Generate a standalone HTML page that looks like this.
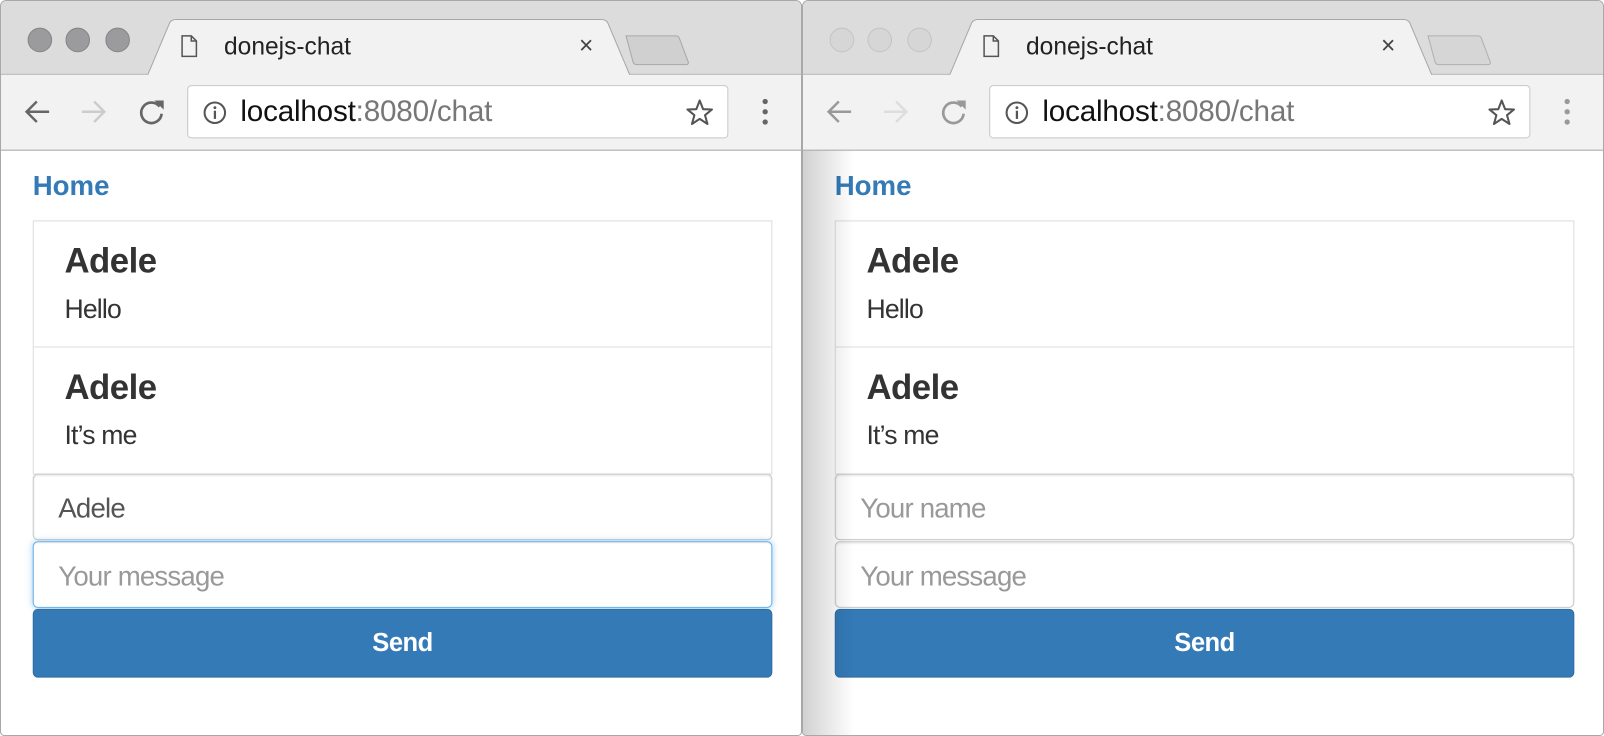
<!DOCTYPE html>
<html><head><meta charset="utf-8"><style>
*{box-sizing:border-box;margin:0;padding:0}
html,body{width:1604px;height:736px;overflow:hidden;background:#fff;font-family:"Liberation Sans",Arial,sans-serif}
#stage{position:absolute;left:0;top:0;width:1568px;height:718px;transform:scale(1.02296,1.02507);transform-origin:0 0}
.win{position:absolute;top:0;width:784px;height:718px;border:1px solid #a8a8a8;border-radius:6px 6px 4px 4px;overflow:hidden;background:#fff}
.top{position:absolute;left:0;top:0;right:0;height:72px;background:#dcdcdc;border-bottom:1px solid #b0b0b0}
.light{position:absolute;top:26px;width:24px;height:24px;border-radius:50%;background:#9b9a9c;border:1px solid #86858a}
.inactive .light{background:#d6d6d6;border-color:#c4c4c4}
.tab{position:absolute;left:143px;top:17px;width:472px;height:56px}
.newtab{position:absolute;left:608px;top:32px;width:66px;height:32px}
.tabtitle{position:absolute;left:218px;top:31px;font-size:24px;color:#222}
.tabx{position:absolute;left:565px;top:30px;font-size:24px;color:#444}
.bar{position:absolute;left:0;right:0;top:72px;height:74px;background:#f2f2f2;border-bottom:1px solid #a8a8a8}
.omni{position:absolute;left:182px;top:10px;width:529px;height:52px;background:#fff;border:1px solid #c8c8c8;border-radius:4px}
.url{position:absolute;left:51px;top:9px;font-size:29px;color:#111;letter-spacing:-0.2px}
.url span{color:#777}
.home{position:absolute;left:31px;top:165px;font-size:27px;font-weight:bold;color:#337ab7}
.list{position:absolute;left:31px;top:214px;width:723px;height:248px;border:1px solid #ddd}
.item{height:123px;border-bottom:1px solid #ddd;padding:0 0 0 30px;position:relative}
.item:last-child{border-bottom:none}
.item b{position:absolute;left:30px;top:20px;font-size:34px;color:#333;letter-spacing:-0.5px}
.item i{position:absolute;left:30px;top:70px;font-size:26px;font-style:normal;color:#333;letter-spacing:-0.8px}
.inp{position:absolute;left:31px;width:723px;height:65px;border:1px solid #c8c8c8;border-radius:5px;background:#fff;box-shadow:inset 0 1px 2px rgba(0,0,0,.12);font-size:27px;padding:18px 0 0 24px;color:#999;letter-spacing:-0.8px}
.focus{border-color:#66afe9;box-shadow:inset 0 1px 1px rgba(0,0,0,.075),0 0 6px rgba(102,175,233,.6)}
.btn{position:absolute;left:31px;top:593px;width:723px;height:67px;background:#337ab7;border:1px solid #2e6da4;border-radius:5px;color:#fff;font-size:25px;font-weight:bold;text-align:center;line-height:64px;letter-spacing:-0.5px}
.shadow{position:absolute;left:0;top:146px;width:50px;bottom:0;background:linear-gradient(90deg,rgba(0,0,0,.18),rgba(0,0,0,0))}
</style></head><body><div id="stage">

<div class="win" style="left:0">
 <div class="top"></div>
 <div class="light" style="left:26px"></div><div class="light" style="left:63px"></div><div class="light" style="left:102px"></div>
 <svg class="tab" viewBox="0 0 472 56"><path d="M0 56 L22 4 Q24 1 28 1 L444 1 Q448 1 450 4 L472 56 Z" fill="#f2f2f2" stroke="#a8a8a8"/><rect x="1" y="55" width="470" height="2" fill="#f2f2f2"/></svg>
 <svg class="newtab" viewBox="0 0 66 32"><path d="M3 2 L52 2 Q54 2 55 4 L64 28 Q64 30 62 30 L13 30 Q11 30 10 28 Z" fill="#d0d0d0" stroke="#a8a8a8"/></svg>
 <svg style="position:absolute;left:176px;top:33px" width="16" height="22" viewBox="0 0 16 22"><path d="M1 1 H10 L15 6 V21 H1 Z M10 1 V6 H15" fill="none" stroke="#555" stroke-width="1.5"/></svg>
 <div class="tabtitle">donejs-chat</div><div class="tabx">×</div>
 <div class="bar">
  <svg style="position:absolute;left:22px;top:22px" width="28" height="28" viewBox="0 0 28 28"><path d="M25 14 H4 M13 4 L3 14 L13 24" fill="none" stroke="#666" stroke-width="2.4"/></svg>
  <svg style="position:absolute;left:76px;top:22px" width="28" height="28" viewBox="0 0 28 28"><path d="M3 14 H24 M15 4 L25 14 L15 24" fill="none" stroke="#ccc" stroke-width="2.4"/></svg>
  <svg style="position:absolute;left:133px;top:22px" width="28" height="28" viewBox="0 0 28 28"><path d="M22 9 A10 10 0 1 0 24 16" fill="none" stroke="#666" stroke-width="2.6"/><path d="M17 3 L26 3 L26 12 Z" fill="#666"/></svg>
  <div class="omni">
   <svg style="position:absolute;left:14px;top:14px" width="24" height="24" viewBox="0 0 24 24"><circle cx="12" cy="12" r="10" fill="none" stroke="#555" stroke-width="2"/><rect x="11" y="10" width="2.2" height="8" fill="#555"/><circle cx="12.1" cy="7" r="1.4" fill="#555"/></svg>
   <div class="url">localhost<span>:8080/chat</span></div>
   <svg style="position:absolute;left:486px;top:12px" width="28" height="28" viewBox="0 0 28 28"><path d="M14 2 L17.3 10.5 L26 10.8 L19.2 16.4 L21.6 25 L14 20 L6.4 25 L8.8 16.4 L2 10.8 L10.7 10.5 Z" fill="none" stroke="#555" stroke-width="2" stroke-linejoin="round"/></svg>
  </div>
  <svg style="position:absolute;left:742px;top:22px" width="10" height="30" viewBox="0 0 10 30"><circle cx="5" cy="4" r="2.6" fill="#666"/><circle cx="5" cy="14" r="2.6" fill="#666"/><circle cx="5" cy="24" r="2.6" fill="#666"/></svg>
 </div>
 <div class="home">Home</div>
 <div class="list"><div class="item"><b>Adele</b><i>Hello</i></div><div class="item"><b>Adele</b><i>It’s me</i></div></div>
 <div class="inp" style="top:461px;color:#555">Adele</div>
 <div class="inp focus" style="top:527px">Your message</div>
 <div class="btn">Send</div>
</div>

<div class="win inactive" style="left:784px">
 <div class="top"></div>
 <div class="light" style="left:26px"></div><div class="light" style="left:63px"></div><div class="light" style="left:102px"></div>
 <svg class="tab" viewBox="0 0 472 56"><path d="M0 56 L22 4 Q24 1 28 1 L444 1 Q448 1 450 4 L472 56 Z" fill="#f2f2f2" stroke="#a8a8a8"/><rect x="1" y="55" width="470" height="2" fill="#f2f2f2"/></svg>
 <svg class="newtab" viewBox="0 0 66 32"><path d="M3 2 L52 2 Q54 2 55 4 L64 28 Q64 30 62 30 L13 30 Q11 30 10 28 Z" fill="#d6d6d6" stroke="#b0b0b0"/></svg>
 <svg style="position:absolute;left:176px;top:33px" width="16" height="22" viewBox="0 0 16 22"><path d="M1 1 H10 L15 6 V21 H1 Z M10 1 V6 H15" fill="none" stroke="#555" stroke-width="1.5"/></svg>
 <div class="tabtitle">donejs-chat</div><div class="tabx">×</div>
 <div class="bar">
  <svg style="position:absolute;left:22px;top:22px" width="28" height="28" viewBox="0 0 28 28"><path d="M25 14 H4 M13 4 L3 14 L13 24" fill="none" stroke="#999" stroke-width="2.4"/></svg>
  <svg style="position:absolute;left:76px;top:22px" width="28" height="28" viewBox="0 0 28 28"><path d="M3 14 H24 M15 4 L25 14 L15 24" fill="none" stroke="#ddd" stroke-width="2.4"/></svg>
  <svg style="position:absolute;left:133px;top:22px" width="28" height="28" viewBox="0 0 28 28"><path d="M22 9 A10 10 0 1 0 24 16" fill="none" stroke="#999" stroke-width="2.6"/><path d="M17 3 L26 3 L26 12 Z" fill="#999"/></svg>
  <div class="omni">
   <svg style="position:absolute;left:14px;top:14px" width="24" height="24" viewBox="0 0 24 24"><circle cx="12" cy="12" r="10" fill="none" stroke="#555" stroke-width="2"/><rect x="11" y="10" width="2.2" height="8" fill="#555"/><circle cx="12.1" cy="7" r="1.4" fill="#555"/></svg>
   <div class="url">localhost<span>:8080/chat</span></div>
   <svg style="position:absolute;left:486px;top:12px" width="28" height="28" viewBox="0 0 28 28"><path d="M14 2 L17.3 10.5 L26 10.8 L19.2 16.4 L21.6 25 L14 20 L6.4 25 L8.8 16.4 L2 10.8 L10.7 10.5 Z" fill="none" stroke="#555" stroke-width="2" stroke-linejoin="round"/></svg>
  </div>
  <svg style="position:absolute;left:742px;top:22px" width="10" height="30" viewBox="0 0 10 30"><circle cx="5" cy="4" r="2.6" fill="#999"/><circle cx="5" cy="14" r="2.6" fill="#999"/><circle cx="5" cy="24" r="2.6" fill="#999"/></svg>
 </div>
 <div class="home">Home</div>
 <div class="list"><div class="item"><b>Adele</b><i>Hello</i></div><div class="item"><b>Adele</b><i>It’s me</i></div></div>
 <div class="inp" style="top:461px">Your name</div>
 <div class="inp" style="top:527px">Your message</div>
 <div class="btn">Send</div>
 <div class="shadow"></div>
</div>

</div></body></html>
